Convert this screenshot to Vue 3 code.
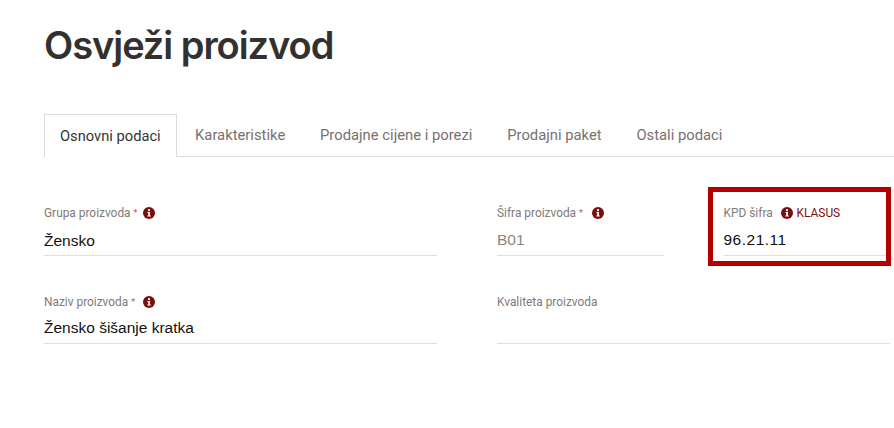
<script setup>
const tabs = ['Osnovni podaci', 'Karakteristike', 'Prodajne cijene i porezi', 'Prodajni paket', 'Ostali podaci']
</script>

<template>
  <main class="page">
    <h1 class="title">Osvježi proizvod</h1>
    <nav class="tabs">
      <a v-for="(t, i) in tabs" :key="t" class="tab" :class="{ active: i === 0 }">{{ t }}</a>
    </nav>
    <section class="form">
      <div class="row">
        <div class="field wide">
          <label class="label">Grupa proizvoda<span class="req">*</span>
            <svg class="info gap-s" viewBox="0 0 12 12"><circle cx="6" cy="6" r="6" fill="#7b0d0d"/><rect x="5" y="2.2" width="2" height="1.9" fill="#fff"/><path d="M4.4 5h2.6v3.6h.8v1H4.4v-1h.8V6h-.8z" fill="#fff"/></svg>
          </label>
          <div class="value">Žensko</div>
        </div>
        <div class="field narrow">
          <label class="label">Šifra proizvoda<span class="req">*</span>
            <svg class="info gap-m" viewBox="0 0 12 12"><circle cx="6" cy="6" r="6" fill="#7b0d0d"/><rect x="5" y="2.2" width="2" height="1.9" fill="#fff"/><path d="M4.4 5h2.6v3.6h.8v1H4.4v-1h.8V6h-.8z" fill="#fff"/></svg>
          </label>
          <div class="value muted">B01</div>
        </div>
        <div class="field narrow kpd">
          <label class="label">KPD šifra
            <svg class="info gap-k" viewBox="0 0 12 12"><circle cx="6" cy="6" r="6" fill="#7b0d0d"/><rect x="5" y="2.2" width="2" height="1.9" fill="#fff"/><path d="M4.4 5h2.6v3.6h.8v1H4.4v-1h.8V6h-.8z" fill="#fff"/></svg>
            <span class="klasus">KLASUS</span>
          </label>
          <div class="value code">96.21.11</div>
          <div class="highlight"></div>
        </div>
      </div>
      <div class="row">
        <div class="field wide">
          <label class="label">Naziv proizvoda<span class="req">*</span>
            <svg class="info gap-l" viewBox="0 0 12 12"><circle cx="6" cy="6" r="6" fill="#7b0d0d"/><rect x="5" y="2.2" width="2" height="1.9" fill="#fff"/><path d="M4.4 5h2.6v3.6h.8v1H4.4v-1h.8V6h-.8z" fill="#fff"/></svg>
          </label>
          <div class="value second">Žensko šišanje kratka</div>
        </div>
        <div class="field wide">
          <label class="label">Kvaliteta proizvoda</label>
          <div class="value second"></div>
        </div>
      </div>
    </section>
  </main>
</template>

<style>
html, body { margin: 0; background: #fff; overflow: hidden; }
</style>

<style scoped>
.page {
  width: 894px;
  height: 428px;
  box-sizing: border-box;
  padding: 24px 0 0 44px;
  font-family: Roboto, "Liberation Sans", sans-serif;
  overflow: hidden;
}
.title {
  margin: 0;
  height: 42px;
  font-family: Inter, Lato, sans-serif;
  font-size: 38px;
  line-height: 42px;
  font-weight: 600;
  color: #333030;
  letter-spacing: -1.05px;
}
.tabs {
  display: flex;
  margin-top: 48px;
  height: 42px;
  border-bottom: 1px solid #dcdcdc;
}
.tab {
  box-sizing: border-box;
  height: 42px;
  padding: 12px 17.4px 0;
  font-size: 14.8px;
  line-height: 18px;
  color: #77716f;
  white-space: nowrap;
}
.tab.active {
  height: 43px;
  padding: 12px 15px 0;
  margin-right: 1px;
  font-size: 14.7px;
  color: #333;
  background: #fff;
  border: 1px solid #dcdcdc;
  border-bottom: 0;
}
.form {
  display: flex;
  flex-direction: column;
  gap: 39px;
  margin-top: 49px;
  width: 846px;
}
.row { display: flex; gap: 60px; }
.field { display: flex; flex-direction: column; position: relative; }
.wide { width: 393px; }
.narrow { width: 166.5px; }
.label {
  display: flex;
  align-items: center;
  height: 14px;
  font-size: 11.9px;
  line-height: 14px;
  color: #807a78;
  white-space: pre;
}
.req { color: #c9525a; font-size: 9px; margin-left: 3px; align-self: flex-start; }
.info { width: 12px; height: 12px; flex: none; }
.gap-s { margin-left: 6px; }
.gap-m { margin-left: 9px; }
.gap-l { margin-left: 8px; }
.gap-k { margin-left: 5px; }
.klasus { color: #7b0d0d; margin-left: 4px; }
.value {
  box-sizing: border-box;
  height: 36px;
  padding-top: 11px;
  font-family: "Liberation Sans", Arial, sans-serif;
  font-size: 15.5px;
  line-height: 20px;
  color: #111;
  border-bottom: 1px solid #dfdfdf;
}
.code { letter-spacing: 0.5px; padding-top: 10px; }
.second { height: 35px; padding-top: 9px; }
.muted { color: #8a8583; padding-top: 10px; }
.highlight {
  position: absolute;
  left: -16px;
  top: -19px;
  width: 183px;
  height: 79px;
  box-sizing: border-box;
  border: 5px solid #b30000;
  pointer-events: none;
}
</style>
